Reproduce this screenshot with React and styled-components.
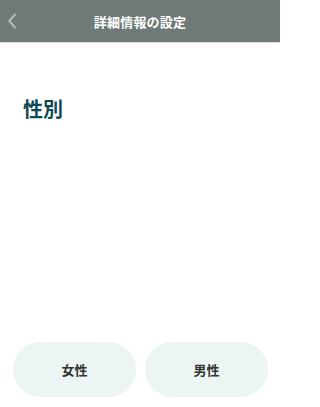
import styled, { createGlobalStyle } from 'styled-components';

const GlobalStyle = createGlobalStyle`
  html, body {
    margin: 0;
    padding: 0;
    background: #ffffff;
  }
  body {
    font-family: "Noto Sans CJK JP", "Noto Sans", sans-serif;
  }
`;

const Page = styled.div`
  width: 280px;
  height: 407px;
  display: flex;
  flex-direction: column;
  background: #ffffff;
  overflow: hidden;
`;

const Header = styled.header`
  height: 42px;
  flex-shrink: 0;
  display: flex;
  align-items: center;
  justify-content: center;
  position: relative;
  background: #6f7a78;
  border-bottom: 1px solid #dfe3e2;
`;

const BackButton = styled.button`
  position: absolute;
  left: 4px;
  top: 50%;
  transform: translateY(-50%);
  width: 16px;
  height: 24px;
  padding: 0;
  border: none;
  background: transparent;
  display: flex;
  align-items: center;
  justify-content: center;
`;

const Title = styled.h1`
  margin: 0;
  font-size: 13px;
  font-weight: 700;
  color: #ffffff;
  letter-spacing: 0.2px;
`;

const Content = styled.main`
  flex: 1;
  display: flex;
  flex-direction: column;
  padding: 52px 23px 0;
`;

const Label = styled.h2`
  margin: 0;
  font-size: 20px;
  font-weight: 700;
  line-height: 28px;
  color: #0d4a55;
`;

const Choices = styled.div`
  display: flex;
  gap: 9px;
  padding: 0 12px 10px 13px;
`;

const Choice = styled.button`
  flex: 1;
  height: 55px;
  border: none;
  border-radius: 28px;
  background: #edf5f4;
  font-family: "Noto Sans CJK JP", "Noto Sans", sans-serif;
  font-size: 13px;
  font-weight: 700;
  color: #333333;
  padding: 0;
`;

const App = () => {
  return (
    <>
      <GlobalStyle />
      <Page>
        <Header>
          <BackButton aria-label="戻る">
            <svg width="10" height="16" viewBox="0 0 10 16" fill="none">
              <path d="M8 1.5L2.2 8L8 14.5" stroke="#b3bbba" strokeWidth="2" strokeLinecap="round" strokeLinejoin="round" />
            </svg>
          </BackButton>
          <Title>詳細情報の設定</Title>
        </Header>
        <Content>
          <Label>性別</Label>
        </Content>
        <Choices>
          <Choice>女性</Choice>
          <Choice>男性</Choice>
        </Choices>
      </Page>
    </>
  );
};

export default App;
